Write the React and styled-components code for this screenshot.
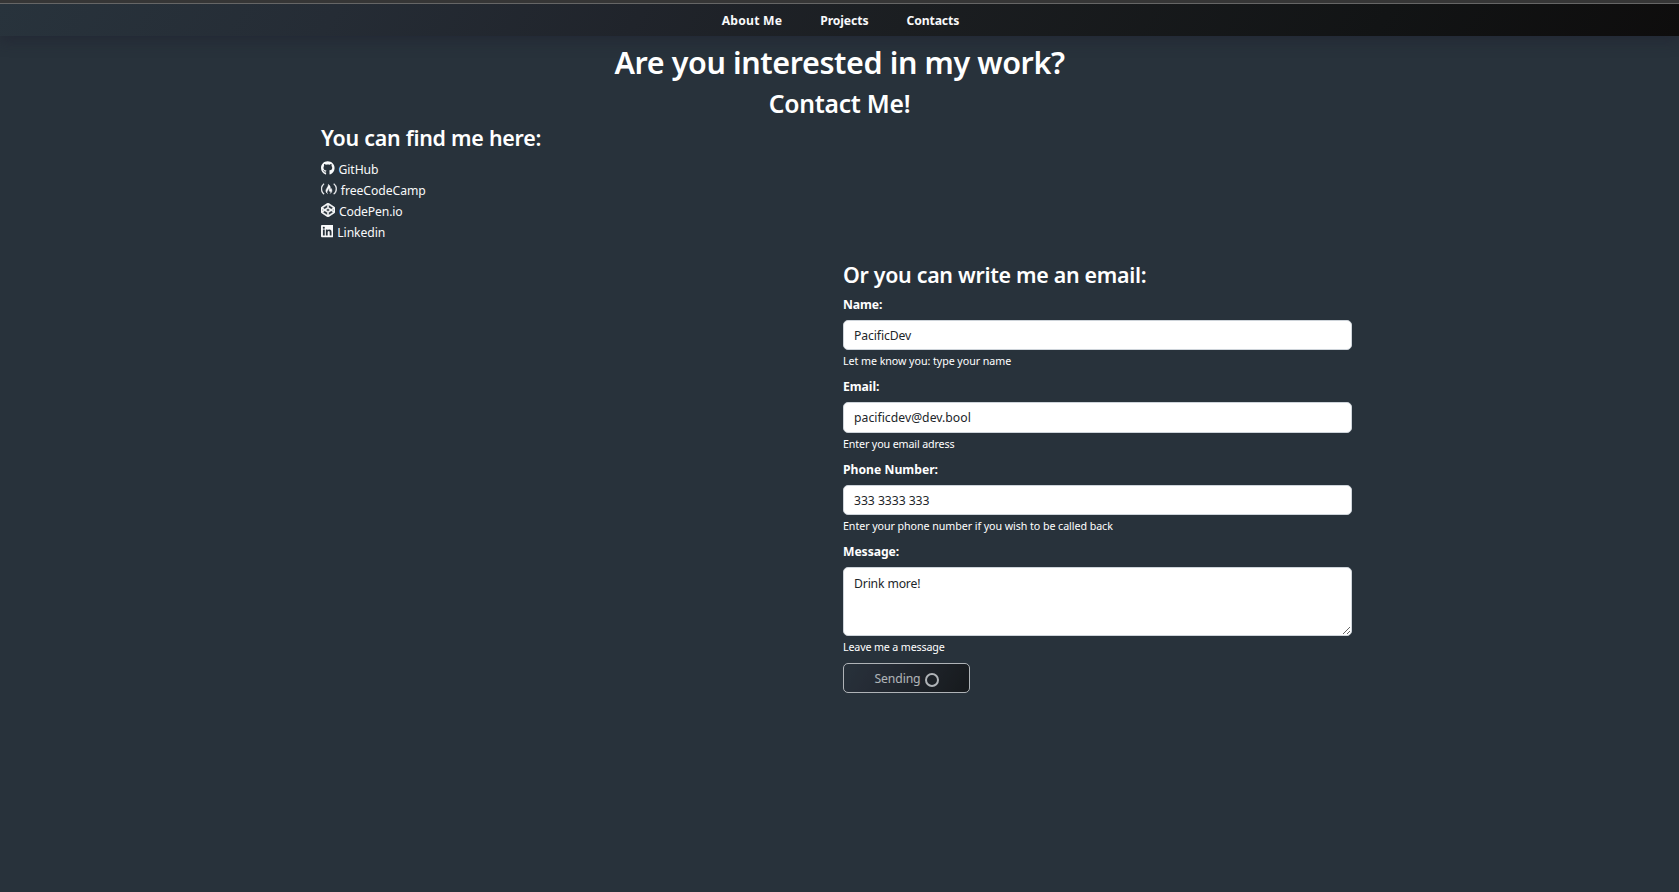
import React from "react";
import styled, { createGlobalStyle } from "styled-components";
import { FaGithub, FaFreeCodeCamp, FaCodepen, FaLinkedin } from "react-icons/fa";

const GlobalStyle = createGlobalStyle`
  *, *::before, *::after { box-sizing: border-box; }
  html { background: #28323b; }
  body {
    margin: 0;
    color: #fff;
    font-family: "Noto Sans", "Open Sans", sans-serif;
    font-size: 12.2px;
    line-height: 21px;
  }
  h1, h2, h3, p, ul { margin: 0; padding: 0; }
`;

const Page = styled.div`
  min-height: 892px;
  background: #28323b;
`;

const Header = styled.header`
  height: 36px;
  border-top: 3px solid #363636;
  background: linear-gradient(120deg, #28333c 0%, #252c35 20%, #20242b 38%, #1b1e21 54%, #121415 82%, #0e0d0d 100%);
  box-shadow: 0 6px 13px rgba(32, 34, 48, 0.5);
`;

const Nav = styled.nav`
  height: 33px;
  padding-left: 2px;
  border-top: 1px solid #666;
  display: flex;
  align-items: center;
  justify-content: center;
  gap: 38px;
`;

const NavLink = styled.a`
  color: #f8f9fa;
  font-weight: 700;
  letter-spacing: ${(p) => p.$spacing}px;
`;

const Title = styled.h1`
  padding-top: 7px;
  font-size: 30.5px;
  line-height: 38px;
  font-weight: 600;
  letter-spacing: -0.4px;
  text-align: center;
`;

const Subtitle = styled.h2`
  margin-top: 7px;
  font-size: 24.7px;
  line-height: 31px;
  font-weight: 600;
  letter-spacing: -0.25px;
  text-align: center;
`;

const Content = styled.main`
  width: 1037px;
  margin: 5px auto 0;
`;

const SectionTitle = styled.h3`
  font-size: 21.4px;
  line-height: 27px;
  font-weight: 600;
  letter-spacing: ${(p) => p.$spacing}px;
`;

const LinkList = styled.ul`
  list-style: none;
  margin-top: 8px;
`;

const LinkItem = styled.li`
  display: flex;
  align-items: center;
  height: 21px;
  color: #f8f9fa;
  letter-spacing: ${(p) => p.$spacing}px;
  svg {
    flex: none;
    height: 14px;
    width: ${(p) => p.$iconWidth}px;
    margin: 0 4px 3px 0;
    stroke: currentColor;
    stroke-width: ${(p) => p.$stroke};
  }
`;

const Form = styled.form`
  width: 509px;
  margin: 18px 0 0 522px;
`;

const Fields = styled.div`
  margin-top: 6.7px;
`;

const Field = styled.div`
  height: ${(p) => p.$height}px;
  display: flex;
  flex-direction: column;
`;

const Label = styled.label`
  padding-top: 0.3px;
  line-height: 20px;
  font-weight: 700;
  letter-spacing: ${(p) => p.$spacing}px;
`;

const Control = styled.input`
  display: block;
  width: 100%;
  height: 30.4px;
  margin-top: 4.9px;
  padding: 1px 10px 0;
  border: 1px solid #ced4da;
  border-radius: 5px;
  background: #fff;
  color: #212529;
  font: inherit;
  letter-spacing: ${(p) => p.$spacing}px;
`;

const TextArea = styled(Control)`
  height: 69px;
  padding-top: 5px;
  resize: vertical;
`;

const Help = styled.p`
  margin-top: 3px;
  font-size: 10.7px;
  line-height: 16px;
  letter-spacing: ${(p) => p.$spacing}px;
`;

const SendButton = styled.button`
  display: flex;
  align-items: center;
  justify-content: center;
  gap: 4px;
  width: 127px;
  height: 30px;
  padding: 1px 6px 0;
  border: 1px solid #f8f9fa;
  border-radius: 5px;
  background: linear-gradient(120deg, #28323b 0%, #242933 25%, #0e0d0d 100%);
  color: #f8f9fa;
  font: inherit;
  letter-spacing: -0.1px;
  opacity: 0.65;
`;

const Spinner = styled.span`
  width: 14px;
  height: 14px;
  margin-top: 4px;
  border: 2.5px solid #f8f9fa;
  border-radius: 50%;
`;

const links = [
  { name: "GitHub", Icon: FaGithub, width: 13.6, stroke: 0, spacing: -0.12 },
  { name: "freeCodeCamp", Icon: FaFreeCodeCamp, width: 15.8, stroke: 18, spacing: -0.05 },
  { name: "CodePen.io", Icon: FaCodepen, width: 14, stroke: 20, spacing: -0.15 },
  { name: "Linkedin", Icon: FaLinkedin, width: 12.3, stroke: 0, spacing: -0.1 },
];

const fields = [
  { id: "name", label: "Name:", value: "PacificDev", help: "Let me know you: type your name", ls: [-0.12, -0.1, -0.06] },
  { id: "email", label: "Email:", value: "pacificdev@dev.bool", help: "Enter you email adress", ls: [-0.05, 0.03, -0.13] },
  { id: "phone", label: "Phone Number:", value: "333 3333 333", help: "Enter your phone number if you wish to be called back", ls: [0, -0.05, -0.07] },
];

export default function App() {
  return (
    <Page>
      <GlobalStyle />
      <Header>
        <Nav>
          <NavLink $spacing={0.2}>About Me</NavLink>
          <NavLink $spacing={-0.1}>Projects</NavLink>
          <NavLink $spacing={-0.1}>Contacts</NavLink>
        </Nav>
      </Header>
      <Title>Are you interested in my work?</Title>
      <Subtitle>Contact Me!</Subtitle>
      <Content>
        <SectionTitle $spacing={-0.25}>You can find me here:</SectionTitle>
        <LinkList>
          {links.map(({ name, Icon, width, stroke, spacing }) => (
            <LinkItem key={name} $iconWidth={width} $stroke={stroke} $spacing={spacing}>
              <Icon />
              {name}
            </LinkItem>
          ))}
        </LinkList>
        <Form>
          <SectionTitle $spacing={-0.3}>Or you can write me an email:</SectionTitle>
          <Fields>
            {fields.map((f) => (
              <Field key={f.id} $height={82.4}>
                <Label htmlFor={f.id} $spacing={f.ls[0]}>{f.label}</Label>
                <Control id={f.id} defaultValue={f.value} $spacing={f.ls[1]} />
                <Help $spacing={f.ls[2]}>{f.help}</Help>
              </Field>
            ))}
            <Field $height={121}>
              <Label htmlFor="message" $spacing={-0.08}>Message:</Label>
              <TextArea as="textarea" id="message" defaultValue="Drink more!" $spacing={-0.15} />
              <Help $spacing={-0.15}>Leave me a message</Help>
            </Field>
          </Fields>
          <SendButton type="button" disabled>Sending <Spinner /></SendButton>
        </Form>
      </Content>
    </Page>
  );
}
